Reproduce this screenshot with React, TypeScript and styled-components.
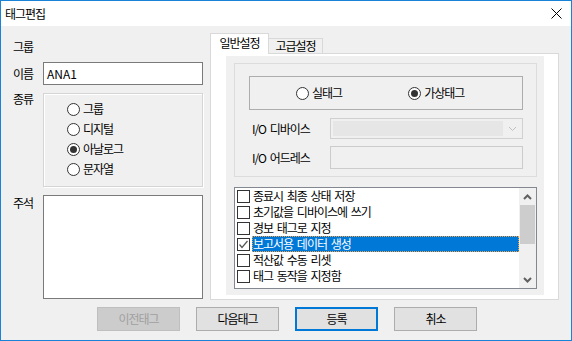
import React from "react";
import styled, { createGlobalStyle, css } from "styled-components";

const Global = createGlobalStyle`
  html, body { margin: 0; padding: 0; background: #f0f0f0; }
  body {
    font-family: "Noto Sans CJK KR", "Malgun Gothic", sans-serif;
    font-size: 12px;
    color: #000;
  }
  * { box-sizing: border-box; }
`;

const Window = styled.div`
  width: 572px;
  height: 341px;
  border: 1px solid #1883d7;
  background: #f0f0f0;
  display: flex;
  flex-direction: column;
  overflow: hidden;
  letter-spacing: -1px;
  word-spacing: 2px;
  line-height: 14px;
`;

const TitleBar = styled.div`
  height: 25px;
  flex: none;
  background: #fff;
  display: flex;
  align-items: center;
  justify-content: space-between;
  padding: 0 9px 0 4px;
`;

const TitleText = styled.span`
  font-size: 12px;
`;

const CloseBtn = styled.span`
  display: flex;
  width: 11px;
  height: 11px;
`;

const Body = styled.div`
  flex: 1;
  display: flex;
  flex-direction: column;
`;

const Main = styled.div`
  display: flex;
  align-items: flex-start;
`;

const LeftCol = styled.div`
  margin: 14px 0 0 12px;
  display: grid;
  grid-template-columns: 30px 160px;
  grid-template-rows: 14px 23px 94px 104px;
  row-gap: 8px;
`;

const FieldLabel = styled.div<{ $align?: "start" | "center"; $offset?: number }>`
  align-self: ${(p) => p.$align ?? "center"};
  margin-top: ${(p) => p.$offset ?? 0}px;
  white-space: nowrap;
`;

const TextInput = styled.div`
  border: 1px solid #7a7a7a;
  background: #fff;
  display: flex;
  align-items: center;
  padding-left: 3px;
  letter-spacing: 0;
`;

const TextArea = styled.div`
  border: 1px solid #7a7a7a;
  background: #fff;
`;

const EtchedBox = styled.div`
  border: 1px solid #d5d5d5;
  box-shadow: 1px 1px 0 #fff, inset 1px 1px 0 #fff;
`;

const KindBox = styled(EtchedBox)`
  padding-top: 5px;
  display: flex;
  flex-direction: column;
`;

const RadioRow = styled.div`
  height: 20px;
  padding-left: 23px;
  display: flex;
  align-items: center;
  gap: 3px;
`;

const RadioCircle = styled.span<{ $checked?: boolean }>`
  width: 13px;
  height: 13px;
  flex: none;
  border-radius: 50%;
  border: 1px solid #333;
  background: #fff;
  display: grid;
  place-items: center;
  &::after {
    content: "";
    width: 7px;
    height: 7px;
    border-radius: 50%;
    background: ${(p) => (p.$checked ? "#333" : "transparent")};
  }
`;

const RightCol = styled.div`
  margin: 7px 0 0 7px;
  width: 349px;
  display: flex;
  flex-direction: column;
`;

const TabStrip = styled.div`
  height: 20px;
  display: flex;
  align-items: flex-end;
  position: relative;
  z-index: 1;
`;

const Tab = styled.div<{ $active?: boolean }>`
  border: 1px solid #d9d9d9;
  border-bottom: none;
  display: flex;
  align-items: center;
  justify-content: center;
  ${(p) =>
    p.$active
      ? css`
          width: 59px;
          height: 21px;
          margin-bottom: -1px;
          background: #fff;
          padding-bottom: 2px;
        `
      : css`
          width: 54px;
          height: 15px;
          background: #f0f0f0;
          border-left: none;
        `}
`;

const TabPage = styled.div`
  height: 247px;
  border: 1px solid #d9d9d9;
  background: #fff;
  padding: 2px 14px 4px 15px;
`;

const GrayPanel = styled.div`
  height: 100%;
  background: #f0f0f0;
  padding: 7px 7px 6px 8px;
  display: flex;
  flex-direction: column;
  gap: 10px;
`;

const GroupBox = styled.div`
  height: 114px;
  border: 1px solid #dcdcdc;
  padding: 12px 13px 0 14px;
  display: flex;
  flex-direction: column;
`;

const ModeBox = styled.div`
  height: 34px;
  border: 1px solid #adadad;
  display: flex;
  align-items: center;
  padding-left: 46px;
  gap: 66px;
`;

const ModeOption = styled.div`
  display: flex;
  align-items: center;
  gap: 3px;
`;

const FieldRow = styled.div<{ $gap: number; $h: number }>`
  margin-top: ${(p) => p.$gap}px;
  height: ${(p) => p.$h}px;
  display: grid;
  grid-template-columns: 81px 1fr;
  align-items: center;
`;

const RowLabel = styled.span`
  padding-left: 3px;
  white-space: nowrap;
`;

const Combo = styled.div`
  height: 100%;
  border: 1px solid #d0d0d0;
  background: #f0f0f0;
  display: flex;
  padding: 2px 0 2px 2px;
`;

const ComboEdit = styled.div`
  flex: 1;
  background: #e6e6e6;
`;

const ComboArrow = styled.div`
  width: 19px;
  display: grid;
  place-items: center;
`;

const DisabledInput = styled.div`
  height: 100%;
  border: 1px solid #cccccc;
  background: #f0f0f0;
`;

const ListBox = styled.div`
  height: 102px;
  border: 1px solid #828790;
  background: #fff;
  display: flex;
`;

const Items = styled.div`
  flex: 1;
  display: flex;
  flex-direction: column;
`;

const Item = styled.div`
  height: 16px;
  display: flex;
  align-items: center;
  padding-left: 2px;
  gap: 2px;
`;

const CheckBox = styled.span`
  width: 13px;
  height: 13px;
  flex: none;
  border: 1px solid #333;
  background: #fff;
  display: grid;
  place-items: center;
`;

const ItemText = styled.span<{ $selected?: boolean }>`
  flex: 1;
  height: 16px;
  display: flex;
  align-items: center;
  white-space: pre;
  border: 1px ${(p) => (p.$selected ? "dotted #f5a043" : "solid transparent")};
  background: ${(p) => (p.$selected ? "#0078d7" : "transparent")};
  color: ${(p) => (p.$selected ? "#fff" : "#000")};
`;

const ScrollBar = styled.div`
  width: 17px;
  flex: none;
  background: #f0f0f0;
  display: flex;
  flex-direction: column;
`;

const ScrollArrow = styled.div`
  height: 17px;
  display: grid;
  place-items: center;
`;

const ScrollTrack = styled.div`
  flex: 1;
  padding: 0 1px;
`;

const ScrollThumb = styled.div`
  height: 39px;
  background: #cdcdcd;
`;

const Footer = styled.div`
  margin-top: 7px;
  padding-left: 96px;
  display: flex;
  gap: 16px;
`;

const Button = styled.div<{ $variant?: "disabled" | "default" }>`
  width: 83px;
  height: 24px;
  display: flex;
  align-items: center;
  justify-content: center;
  background: #e1e1e1;
  border: 1px solid #adadad;
  ${(p) =>
    p.$variant === "disabled" &&
    css`
      background: #cccccc;
      border-color: #bfbfbf;
      color: #a0a0a0;
    `}
  ${(p) =>
    p.$variant === "default" &&
    css`
      border: 2px solid #0078d7;
    `}
`;

const Chevron = ({ up, bold, color }: { up?: boolean; bold?: boolean; color: string }) => (
  <svg width="9" height="6" viewBox="0 0 9 6">
    <polyline
      points={up ? "1,5 4.5,1.5 8,5" : "1,1 4.5,4.5 8,1"}
      fill="none"
      stroke={color}
      strokeWidth={bold ? 2 : 1}
    />
  </svg>
);

const kinds = [
  { label: "그룹", checked: false },
  { label: "디지털", checked: false },
  { label: "아날로그", checked: true },
  { label: "문자열", checked: false },
];

const options = [
  { label: "종료시 최종 상태 저장", checked: false },
  { label: "초기값을 디바이스에 쓰기", checked: false },
  { label: "경보 태그로 지정", checked: false },
  { label: "보고서용 데이터 생성", checked: true, selected: true },
  { label: "적산값 수동 리셋", checked: false },
  { label: "태그 동작을 지정함", checked: false },
];

export default function App() {
  return (
    <>
      <Global />
      <Window>
        <TitleBar>
          <TitleText>태그편집</TitleText>
          <CloseBtn>
            <svg width="11" height="11" viewBox="0 0 11 11">
              <path d="M0.5 0.5 L10.5 10.5 M10.5 0.5 L0.5 10.5" stroke="#000" strokeWidth="1" />
            </svg>
          </CloseBtn>
        </TitleBar>
        <Body>
          <Main>
            <LeftCol>
              <FieldLabel>그룹</FieldLabel>
              <div />
              <FieldLabel>이름</FieldLabel>
              <TextInput>ANA1</TextInput>
              <FieldLabel $align="start" $offset={-1}>
                종류
              </FieldLabel>
              <KindBox>
                {kinds.map((k) => (
                  <RadioRow key={k.label}>
                    <RadioCircle $checked={k.checked} />
                    <span>{k.label}</span>
                  </RadioRow>
                ))}
              </KindBox>
              <FieldLabel $align="start" $offset={1}>
                주석
              </FieldLabel>
              <TextArea />
            </LeftCol>
            <RightCol>
              <TabStrip>
                <Tab $active>일반설정</Tab>
                <Tab>고급설정</Tab>
              </TabStrip>
              <TabPage>
                <GrayPanel>
                  <GroupBox>
                    <ModeBox>
                      <ModeOption>
                        <RadioCircle />
                        <span>실태그</span>
                      </ModeOption>
                      <ModeOption>
                        <RadioCircle $checked />
                        <span>가상태그</span>
                      </ModeOption>
                    </ModeBox>
                    <FieldRow $gap={8} $h={21}>
                      <RowLabel>I/O 디바이스</RowLabel>
                      <Combo>
                        <ComboEdit />
                        <ComboArrow>
                          <Chevron color="#bfbfbf" />
                        </ComboArrow>
                      </Combo>
                    </FieldRow>
                    <FieldRow $gap={7} $h={23}>
                      <RowLabel>I/O 어드레스</RowLabel>
                      <DisabledInput />
                    </FieldRow>
                  </GroupBox>
                  <ListBox>
                    <Items>
                      {options.map((o) => (
                        <Item key={o.label}>
                          <CheckBox>
                            {o.checked && (
                              <svg width="11" height="11" viewBox="0 0 11 11">
                                <polyline points="1.5,5.5 4,8.5 9.5,2" fill="none" stroke="#555" strokeWidth="1.2" />
                              </svg>
                            )}
                          </CheckBox>
                          <ItemText $selected={o.selected}>{o.label}</ItemText>
                        </Item>
                      ))}
                    </Items>
                    <ScrollBar>
                      <ScrollArrow>
                        <Chevron up bold color="#606060" />
                      </ScrollArrow>
                      <ScrollTrack>
                        <ScrollThumb />
                      </ScrollTrack>
                      <ScrollArrow>
                        <Chevron bold color="#606060" />
                      </ScrollArrow>
                    </ScrollBar>
                  </ListBox>
                </GrayPanel>
              </TabPage>
            </RightCol>
          </Main>
          <Footer>
            <Button $variant="disabled">이전태그</Button>
            <Button>다음태그</Button>
            <Button $variant="default">등록</Button>
            <Button>취소</Button>
          </Footer>
        </Body>
      </Window>
    </>
  );
}
